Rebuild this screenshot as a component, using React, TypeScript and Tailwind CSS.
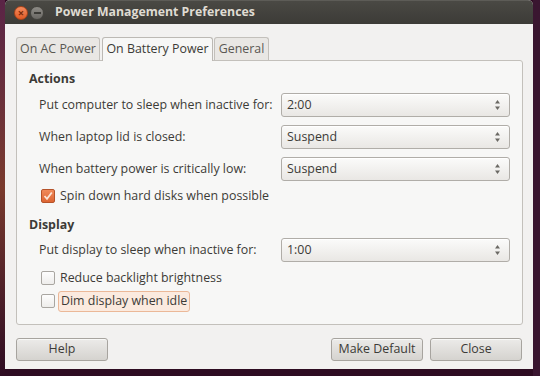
const font = { fontFamily: '"Open Sans", "DejaVu Sans", sans-serif' };

const Arrows = () => (
  <svg width="7" height="12" viewBox="0 0 7 12" className="shrink-0">
    <path d="M3.5 1 L6 4.5 L1 4.5 Z" fill="#6b6964" />
    <path d="M3.5 11 L6 7.5 L1 7.5 Z" fill="#6b6964" />
  </svg>
);

const Combo = ({ value }: { value: string }) => (
  <div className="w-[229px] h-[24px] flex items-center justify-between pl-[5px] pr-[8px] rounded-[3px] border border-[#b0ada8] bg-gradient-to-b from-[#fbfbfa] to-[#e9e7e4] shadow-[inset_0_1px_0_#ffffff] text-[12.4px] text-[#3c3b37]">
    <span>{value}</span>
    <Arrows />
  </div>
);

const Check = ({ checked }: { checked?: boolean }) =>
  checked ? (
    <div className="w-[14px] h-[14px] rounded-[2px] border border-[#b5532a] bg-gradient-to-b from-[#f08a5a] to-[#dd6532] flex items-center justify-center">
      <svg width="10" height="10" viewBox="0 0 10 10">
        <path d="M1.5 5 L4 7.8 L8.8 1.5" stroke="#fbe6d8" strokeWidth="1.8" fill="none" />
      </svg>
    </div>
  ) : (
    <div className="w-[14px] h-[14px] rounded-[2px] border border-[#a9a6a1] bg-gradient-to-b from-[#fdfdfd] to-[#eeedeb]" />
  );

const Row = ({ label, value }: { label: string; value: string }) => (
  <div className="flex items-center h-[24px]">
    <div className="w-[264px] pl-[22px] text-[12.4px] text-[#3c3b37] whitespace-nowrap">{label}</div>
    <Combo value={value} />
  </div>
);

const Button = ({ label, className }: { label: string; className?: string }) => (
  <div className={`h-[23px] w-[92px] flex items-center justify-center rounded-[3px] border border-[#a7a49f] bg-gradient-to-b from-[#ecebe9] to-[#d5d3cf] shadow-[inset_0_1px_0_#f8f8f7] text-[12.4px] text-[#3c3b37] ${className ?? ""}`}>
    {label}
  </div>
);

export default function App() {
  return (
    <div className="w-[540px] h-[376px] flex bg-[#2e0c22] overflow-hidden" style={font}>
      <div className="w-[5px] h-full bg-gradient-to-b from-[#5a2446] via-[#7a3a2c] to-[#2e0c22]" />
      <div className="w-[528px] h-[369px] flex flex-col bg-[#f2f1f0] rounded-t-[5px] overflow-hidden">
        {/* title bar */}
        <div className="h-[24px] flex items-center bg-gradient-to-b from-[#4a4944] to-[#3c3b37] border-t border-[#5d5c57]">
          <div className="ml-[9px] w-[14px] h-[14px] rounded-full bg-gradient-to-b from-[#f48a5c] to-[#e05a24] border border-[#a9441a] flex items-center justify-center text-[#7a2a0a] text-[11px] leading-none font-bold">×</div>
          <div className="ml-[2px] w-[14px] h-[14px] rounded-full bg-gradient-to-b from-[#8d8b86] to-[#6a6864] border border-[#45443f] flex items-center justify-center">
            <div className="w-[7px] h-[2px] bg-[#3c3b37]" />
          </div>
          <div className="ml-[11px] text-[12.3px] font-bold text-[#dfdbd2] whitespace-nowrap">Power Management Preferences</div>
        </div>

        {/* tabs */}
        <div className="mt-[12px] ml-[11px] flex items-end h-[24px]">
          <div className="w-[84px] h-[23px] flex items-center justify-center rounded-t-[3px] border border-b-0 border-[#c3c0bb] bg-[#e9e7e4] text-[12.4px] text-[#5a5853]">On AC Power</div>
          <div className="ml-[2px] w-[111px] h-[24px] flex items-center justify-center rounded-t-[3px] border border-b-0 border-[#bcb9b4] bg-[#f7f7f6] text-[12.4px] text-[#3c3b37] relative z-10 -mb-px">On Battery Power</div>
          <div className="ml-[1px] w-[55px] h-[23px] flex items-center justify-center rounded-t-[3px] border border-b-0 border-[#c3c0bb] bg-[#e9e7e4] text-[12.4px] text-[#5a5853]">General</div>
        </div>

        {/* panel */}
        <div className="ml-[11px] w-[507px] h-[265px] border border-[#c3c0bb] rounded-b-[3px] rounded-tr-[3px] bg-[#f7f7f6] pt-[9px] flex flex-col">
          <div className="pl-[12px] h-[18px] flex items-center text-[12.4px] font-bold text-[#3c3b37]">Actions</div>
          <div className="mt-[5px] flex flex-col gap-[8px]">
            <Row label="Put computer to sleep when inactive for:" value="2:00" />
            <Row label="When laptop lid is closed:" value="Suspend" />
            <Row label="When battery power is critically low:" value="Suspend" />
          </div>
          <div className="mt-[6px] h-[18px] pl-[24px] flex items-center gap-[5px] text-[12.4px] text-[#3c3b37]">
            <Check checked />
            <span>Spin down hard disks when possible</span>
          </div>
          <div className="mt-[11px] pl-[12px] h-[18px] flex items-center text-[12.4px] font-bold text-[#3c3b37]">Display</div>
          <div className="mt-[4px]">
            <Row label="Put display to sleep when inactive for:" value="1:00" />
          </div>
          <div className="mt-[7px] h-[18px] pl-[24px] flex items-center gap-[5px] text-[12.4px] text-[#3c3b37]">
            <Check />
            <span>Reduce backlight brightness</span>
          </div>
          <div className="mt-[3px] h-[22px] pl-[24px] flex items-center gap-[3px] text-[12.4px] text-[#3c3b37]">
            <Check />
            <span className="h-[21px] px-[2px] flex items-center rounded-[3px] border border-[#ebb898] bg-[#fbeadf]">Dim display when idle</span>
          </div>
        </div>

        {/* buttons */}
        <div className="mt-[13px] px-[11px] flex items-center">
          <Button label="Help" />
          <div className="flex-1" />
          <Button label="Make Default" />
          <Button label="Close" className="ml-[7px]" />
        </div>
      </div>
      <div className="w-[7px] h-full bg-[#3a1630]" />
    </div>
  );
}
